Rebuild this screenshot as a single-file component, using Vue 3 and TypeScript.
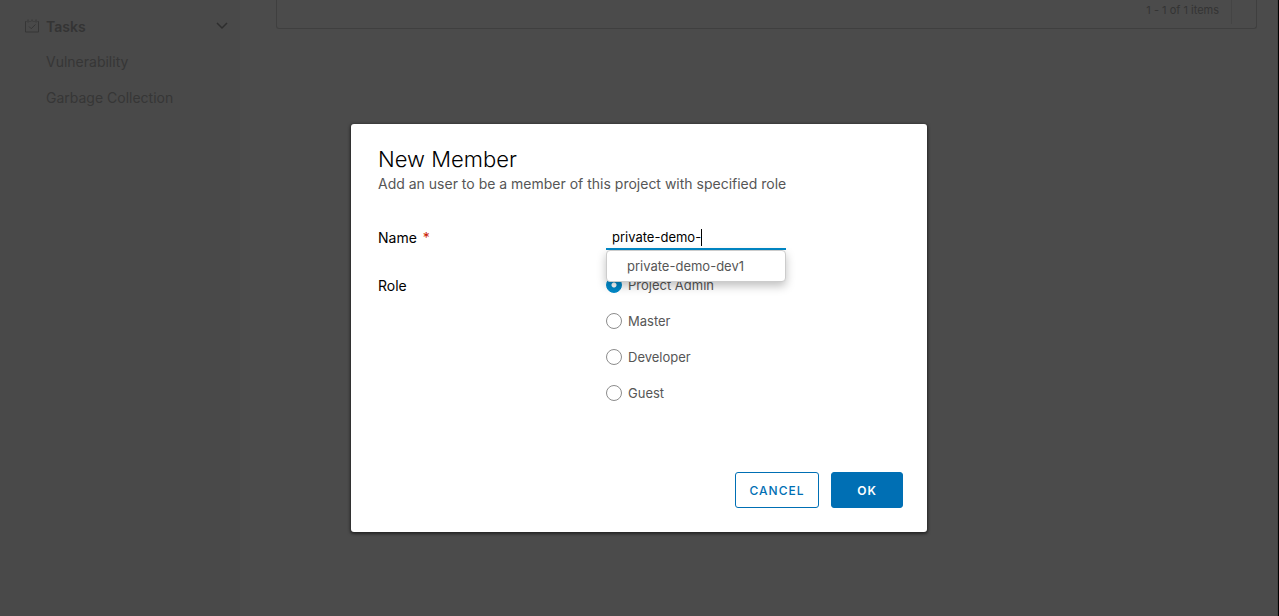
<script setup lang="ts">
import { ref } from 'vue'

const roles: string[] = ['Project Admin', 'Master', 'Developer', 'Guest']
const name = ref('private-demo-')
const role = ref('Project Admin')
const suggestions: string[] = ['private-demo-dev1']
const tasks: string[] = ['Vulnerability', 'Garbage Collection']
</script>

<template>
  <div class="page">
    <nav class="sidebar" aria-label="Main">
      <button type="button" class="group">
        <svg class="task-icon" viewBox="0 0 14 14" width="14" height="14" aria-hidden="true">
          <path d="M1.5 2.5H.5v10.500h13V2.500h-1M4.500 2.500h1M8.500 2.500h1M3 .5v3M7 .5v2M11 .5v3M4 7.500l2.200 2.200L10.500 5.500" />
        </svg>
        <span>Tasks</span>
        <svg class="chevron" viewBox="0 0 12 8" width="12" height="8" aria-hidden="true">
          <path d="M1 1l5 5 5-5" />
        </svg>
      </button>
      <a v-for="task in tasks" :key="task" href="#" class="link">{{ task }}</a>
    </nav>
    <main class="content">
      <footer class="grid-footer">
        <span class="count">1 - 1 of 1 items</span>
      </footer>
    </main>
  </div>

  <div class="overlay">
    <form class="modal" role="dialog" aria-labelledby="title" @submit.prevent>
      <h1 id="title">New Member</h1>
      <p class="intro">Add an user to be a member of this project with specified role</p>

      <div class="row">
        <label class="caption" for="member">Name <span class="required">*</span></label>
        <div class="field">
          <input id="member" v-model="name" class="text" type="text" autocomplete="off" />
          <span class="caret"></span>
          <ul class="menu">
            <li v-for="item in suggestions" :key="item">
              <button type="button" @click="name = item">{{ item }}</button>
            </li>
          </ul>
        </div>
      </div>

      <div class="row roles" role="radiogroup" aria-labelledby="role-caption">
        <span id="role-caption" class="caption">Role</span>
        <div class="options">
          <label v-for="item in roles" :key="item" class="option">
            <input v-model="role" type="radio" name="role" :value="item" />
            <span>{{ item }}</span>
          </label>
        </div>
      </div>

      <div class="actions">
        <button type="button" class="btn cancel">CANCEL</button>
        <button type="submit" class="btn ok">OK</button>
      </div>
    </form>
  </div>
</template>

<style>
body {
  background: #4b4b4b;
}
</style>

<style scoped>
.page,
.overlay {
  box-sizing: border-box;
  font-family: Inter, "Liberation Sans", sans-serif;
}

button,
input {
  font-family: inherit;
}

.page {
  display: flex;
  min-height: 100vh;
  border-right: 1px solid #000;
  background: #4b4b4b;
  color: #393939;
}

.sidebar {
  box-sizing: border-box;
  width: 240px;
  padding-top: 8px;
  background: #494949;
  font-size: 14px;
}

.group {
  display: flex;
  align-items: center;
  width: 100%;
  height: 36px;
  padding: 0 12px 0 25px;
  border: 0;
  background: none;
  color: #343434;
  font-size: 14px;
  font-weight: 600;
}

.group span {
  margin-left: 7px;
}

.task-icon,
.chevron {
  fill: none;
  stroke: #363636;
}

.chevron {
  margin-left: auto;
  stroke: #2e2e2e;
  stroke-width: 1.5;
}

.link {
  display: block;
  padding-left: 46px;
  color: #363636;
  line-height: 36px;
  text-decoration: none;
}

.content {
  flex: 1;
  padding: 0 20px 0 36px;
  border-right: 1px solid #444;
}

.grid-footer {
  display: flex;
  justify-content: flex-end;
  height: 28px;
  padding-right: 24px;
  border: 1px solid #3f3f3f;
  border-top: 0;
  border-radius: 0 0 3px 3px;
}

.count {
  height: 24px;
  padding-right: 12px;
  border-right: 1px solid #444;
  color: #343434;
  font-size: 11px;
  line-height: 21px;
}

.overlay {
  position: absolute;
  inset: 0;
  display: flex;
  align-items: center;
  justify-content: center;
  padding: 40px 1px 0 0;
}

.modal {
  box-sizing: border-box;
  width: 576px;
  padding: 24px 24px 24px 27px;
  border-radius: 3px;
  background: #fff;
  box-shadow: 0 1px 3px 1px rgba(0, 0, 0, 0.5);
  color: #000;
}

h1 {
  margin: 0;
  font-size: 22px;
  font-weight: 300;
  line-height: 22px;
}

.intro {
  margin: 0;
  padding-top: 2px;
  color: #565656;
  font-size: 14px;
  line-height: 24px;
}

.row {
  display: grid;
  grid-template-columns: 228px 1fr;
}

.intro + .row {
  margin-top: 30px;
}

.caption {
  font-size: 14px;
  line-height: 24px;
}

.required {
  margin-left: 2px;
  color: #c92100;
}

.field {
  position: relative;
  width: 180px;
}

.text {
  display: block;
  box-sizing: border-box;
  width: 100%;
  height: 24px;
  padding: 0 6px;
  border: 0;
  border-bottom: 2px solid #0088c7;
  border-radius: 0;
  outline: 0;
  background: none;
  color: #000;
  font-size: 13px;
}

.caret {
  position: absolute;
  top: 3px;
  left: 95px;
  width: 1px;
  height: 17px;
  background: #000;
}

.menu {
  position: absolute;
  top: 24px;
  left: 0;
  z-index: 1;
  box-sizing: border-box;
  width: 100%;
  margin: 0;
  padding: 0;
  border: 1px solid #ccc;
  border-radius: 4px;
  background: #fff;
  box-shadow: 0 4px 10px rgba(0, 0, 0, 0.25);
  list-style: none;
}

.menu button {
  display: block;
  width: 100%;
  height: 30px;
  padding: 0 20px;
  border: 0;
  background: none;
  color: #565656;
  font-size: 13px;
  text-align: left;
}

.roles {
  margin-top: 24px;
}

.option {
  display: flex;
  align-items: center;
  gap: 6px;
  height: 22px;
  margin-bottom: 14px;
  color: #565656;
  font-size: 13px;
}

.option input {
  box-sizing: border-box;
  width: 16px;
  height: 16px;
  margin: 0;
  border: 1px solid #8c8c8c;
  border-radius: 50%;
  appearance: none;
}

.option input:checked {
  border-color: #0088c7;
  background: radial-gradient(circle, #fff 2px, #0088c7 3px);
}

.actions {
  display: flex;
  justify-content: flex-end;
  gap: 12px;
  margin-top: 54px;
}

.btn {
  box-sizing: border-box;
  height: 36px;
  border: 1px solid #006fb4;
  border-radius: 3px;
  font-size: 12px;
  letter-spacing: 1px;
}

.cancel {
  width: 84px;
  background: #fff;
  color: #006fb4;
  font-weight: 500;
}

.ok {
  width: 72px;
  background: #006fb4;
  color: #fff;
  font-weight: 600;
}
</style>
